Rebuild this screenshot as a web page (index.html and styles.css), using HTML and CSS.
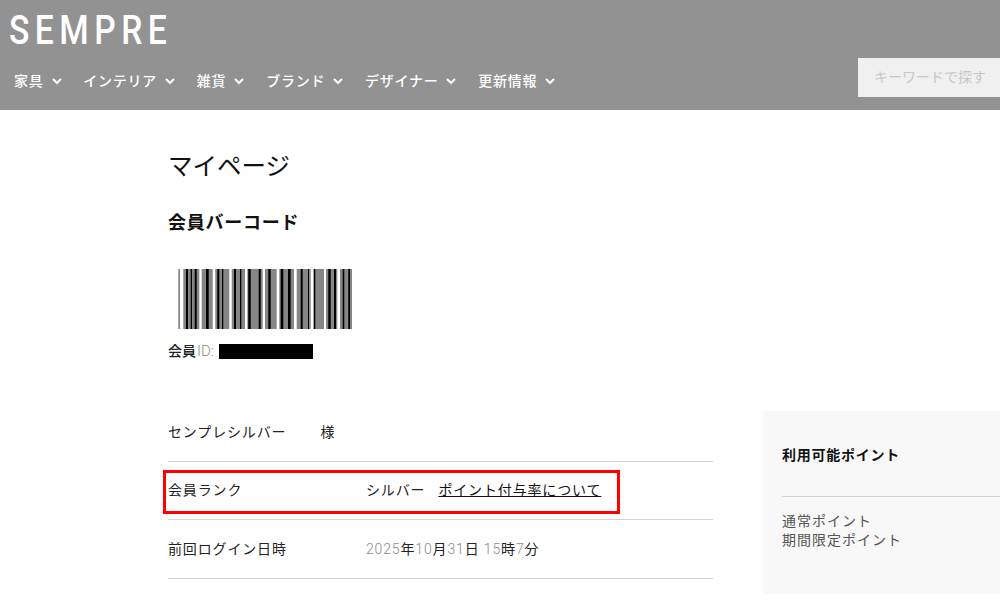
FILE: index.html
```html
<!DOCTYPE html>
<html lang="ja">
<head>
<meta charset="utf-8">
<title>マイページ</title>
<link rel="stylesheet" href="styles.css">
</head>
<body>
<header class="site-header">
  <div class="logo">SEMPRE</div>
  <div class="header-row">
    <nav class="nav">
      <a class="nav-item">家具<svg class="chev" viewBox="0 0 10 7"><path d="M1 1l4 4 4-4"/></svg></a>
      <a class="nav-item">インテリア<svg class="chev" viewBox="0 0 10 7"><path d="M1 1l4 4 4-4"/></svg></a>
      <a class="nav-item">雑貨<svg class="chev" viewBox="0 0 10 7"><path d="M1 1l4 4 4-4"/></svg></a>
      <a class="nav-item">ブランド<svg class="chev" viewBox="0 0 10 7"><path d="M1 1l4 4 4-4"/></svg></a>
      <a class="nav-item">デザイナー<svg class="chev" viewBox="0 0 10 7"><path d="M1 1l4 4 4-4"/></svg></a>
      <a class="nav-item">更新情報<svg class="chev" viewBox="0 0 10 7"><path d="M1 1l4 4 4-4"/></svg></a>
    </nav>
    <div class="search">キーワードで探す</div>
  </div>
</header>
<main class="page">
  <div class="content">
    <h1 class="title">マイページ</h1>
    <h2 class="subtitle">会員バーコード</h2>
    <svg class="barcode" viewBox="0 0 175 60" preserveAspectRatio="none">
      <path class="bar-grey" d="M.3 0h1.700v60h-1.700zM5.300 0h16v60h-16zM23.700 0h11v60h-11zM37.300 0h14v60h-14zM53.700 0h13.300v60h-13.300zM69.300 0h15.400v60h-15.400zM87 0h11.700v60h-11.700zM101.300 0h14.700v60h-14.700zM118.700 0h14v60h-14zM135.300 0h10.700v60h-10.700zM148 0h11.300v60h-11.300zM162 0h12v60h-12z"/>
      <path class="bar-black" d="M8 0h2v60h-2zM12.700 0h1.300v60h-1.300zM16.700 0h2v60h-2zM28 0h2.700v60h-2.700zM39.300 0h2v60h-2zM44 0h1.300v60h-1.300zM56 0h2v60h-2zM62 0h1.300v60h-1.300zM70.300 0h2.400v60h-2.400zM80.700 0h2v60h-2zM90.300 0h2.400v60h-2.400zM102.700 0h2.600v60h-2.600zM110 0h2.700v60h-2.700zM122.700 0h2v60h-2zM130 0h1v60h-1zM136 0h1.300v60h-1.300zM150.300 0h2.400v60h-2.400zM156 0h2v60h-2zM164.700 0h1.600v60h-1.600zM170.300 0h1.700v60h-1.700z"/>
    </svg>
    <p class="member-id"><span class="strong">会員</span><span class="muted id-text">ID:</span><span class="redact"></span></p>
    <div class="info">
      <div class="info-row">センプレシルバー<span class="sama">様</span></div>
      <div class="info-row rank">
        <span class="label">会員ランク</span>
        <span>シルバー</span>
        <a class="rate-link">ポイント付与率について</a>
      </div>
      <div class="info-row">
        <span class="label">前回ログイン日時</span>
        <span><span class="muted">2025</span>年<span class="muted">10</span>月<span class="muted">31</span>日 <span class="muted">15</span>時<span class="muted">7</span>分</span>
      </div>
    </div>
  </div>
  <aside class="points">
    <h3 class="points-title">利用可能ポイント</h3>
    <p class="points-list">通常ポイント<br>期間限定ポイント</p>
  </aside>
</main>
</body>
</html>
```

FILE: styles.css
```css
html, body {
  margin: 0;
  height: 600px;
  overflow: hidden;
  background: #fff;
}
body {
  color: #222;
  font-size: 14px;
  font-family: "Roboto", "Noto Sans CJK JP", sans-serif;
}
.site-header {
  height: 110px;
  background: #929292;
  color: #fff;
  box-sizing: border-box;
  padding-top: 8px;
  display: flex;
  flex-direction: column;
}
.logo {
  font-weight: 500;
  font-size: 41px;
  line-height: 44px;
  letter-spacing: 6.7px;
  margin-left: 9px;
  transform: scaleX(0.82);
  transform-origin: left center;
}
.header-row {
  display: flex;
  justify-content: space-between;
  margin-top: 6px;
}
.nav {
  display: flex;
  gap: 21.8px;
  padding: 13px 0 0 14px;
}
.nav-item {
  display: flex;
  align-items: center;
  gap: 8px;
  font-size: 14px;
  line-height: 20px;
  height: 20px;
  letter-spacing: 0.75px;
  font-weight: 500;
}
.chev {
  width: 10px;
  height: 7px;
  fill: none;
  stroke: #fff;
  stroke-width: 2;
}
.search {
  width: 142px;
  height: 39px;
  box-sizing: border-box;
  background: #f0f0f0;
  color: #c8c8c8;
  font-size: 14px;
  line-height: 38px;
  padding-left: 16px;
  white-space: nowrap;
  overflow: hidden;
}
.page {
  display: flex;
  padding-left: 168px;
  align-items: flex-start;
}
.content {
  width: 545px;
  flex: none;
}
.title {
  margin: 41px 0 0;
  font-size: 24.5px;
  line-height: 32px;
  font-weight: 400;
  color: #111;
}
.subtitle {
  margin: 28px 0 0;
  font-size: 18px;
  line-height: 24px;
  font-weight: 700;
  color: #111;
  letter-spacing: 0.75px;
}
.barcode {
  display: block;
  width: 175px;
  height: 60px;
  margin: 34px 0 0 10px;
}
.bar-grey {
  fill: #868686;
}
.bar-black {
  fill: #000;
}
.member-id {
  margin: 12px 0 0;
  line-height: 20px;
  font-size: 14px;
  display: flex;
  align-items: center;
}
.strong {
  font-weight: 500;
}
.muted {
  color: #8a8a8a;
  font-weight: 300;
}
.id-text {
  font-size: 15px;
  margin-left: 1px;
}
.redact {
  display: inline-block;
  width: 94px;
  height: 15px;
  background: #000;
  margin-left: 5px;
}
.info {
  margin-top: 42px;
}
.info-row {
  display: flex;
  align-items: center;
  height: 58.5px;
  box-sizing: border-box;
  padding-bottom: 2px;
  border-bottom: 1px solid #d4d4d4;
  letter-spacing: 0.85px;
}
.sama {
  margin-left: 34px;
}
.label {
  width: 198px;
  flex: none;
}
.rate-link {
  margin-left: 13px;
  font-weight: 400;
  color: #111;
  text-decoration: underline;
}
.rank {
  position: relative;
}
.rank::after {
  content: "";
  position: absolute;
  left: -5px;
  top: 8px;
  width: 457px;
  height: 44px;
  box-sizing: border-box;
  border: 3px solid #f00;
}
.points {
  flex: none;
  width: 237px;
  height: 183px;
  margin: 301px 0 0 50px;
  background: #f8f8f8;
  box-sizing: border-box;
  padding: 33px 0 0 19px;
}
.points-title {
  margin: 0;
  font-size: 14px;
  line-height: 22px;
  letter-spacing: 0.75px;
  color: #111;
  padding-bottom: 30px;
  border-bottom: 1px solid #d4d4d4;
}
.points-list {
  margin: 15px 0 0;
  font-size: 14px;
  line-height: 19px;
  letter-spacing: 1px;
  color: #555;
}
```
